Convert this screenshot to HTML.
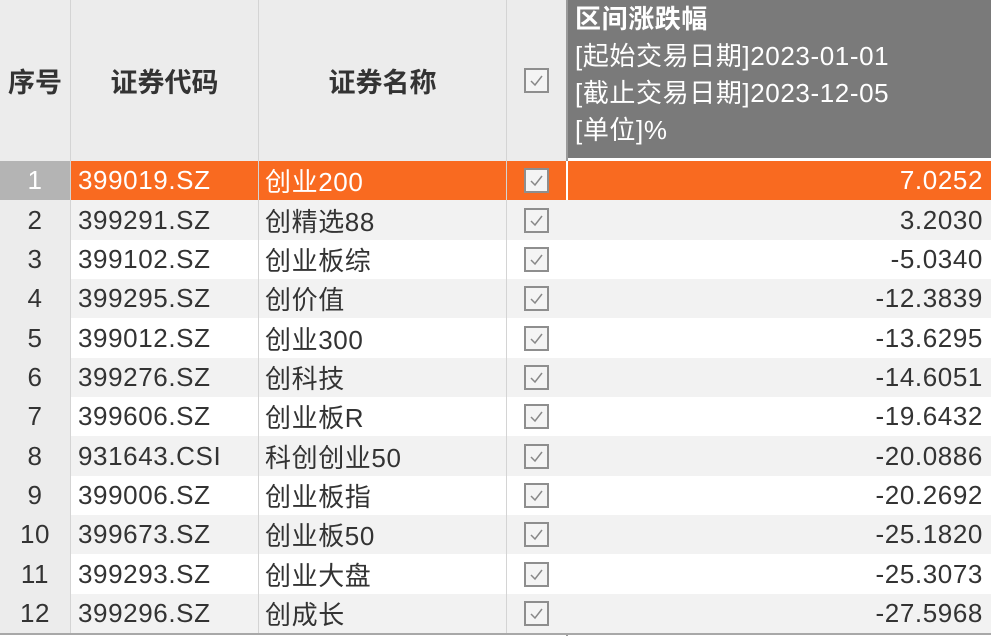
<!DOCTYPE html>
<html><head><meta charset="utf-8"><style>
body{margin:0;width:991px;height:638px;overflow:hidden;background:#fff;font-family:"Liberation Sans","Noto Sans CJK SC",sans-serif;position:relative}
.a{position:absolute;box-sizing:border-box}
.hd{background:#ececec;top:0;height:161px;color:#333;font-weight:bold;font-size:27px;display:flex;align-items:center;justify-content:center;border-right:1px solid #d4d4d4}
.r{position:absolute;left:0;width:991px;height:40px;font-size:26px;letter-spacing:0.6px;color:#333}
.r>div{position:absolute;top:0;height:100%;display:flex;align-items:center;box-sizing:border-box}
.c0{left:0;width:71px;background:#ececec;justify-content:center;border-right:1px solid #d4d4d4}
.c1{left:71px;width:188px;padding-left:7px;border-right:1px solid #d4d4d4}
.c2{left:259px;width:248px;padding-left:6px;border-right:1px solid #d4d4d4}
.c3{left:507px;width:59px;justify-content:center}
.c4{left:568px;width:423px;justify-content:flex-end;padding-right:8px}
.cb{width:25px;height:25px;border:2px solid #8e8e8e;background:#f4f4f4;box-sizing:border-box;position:relative;flex:none}
.cb svg{position:absolute;left:3px;top:4px}
.hl>div{background:#f96a20;color:#fff}
.hl>.c0{background:#b4b4b4;color:#fff}
</style></head><body>
<div class="a hd" style="left:0;width:71px">序号</div>
<div class="a hd" style="left:71px;width:188px">证券代码</div>
<div class="a hd" style="left:259px;width:248px">证券名称</div>
<div class="a hd" style="left:507px;width:59px;border-right:none"><div class="cb"><svg width="15" height="13" viewBox="0 0 15 13"><path d="M2 7 L6 11 L13 2" fill="none" stroke="#888" stroke-width="1.5"/></svg></div></div>
<div class="a" style="left:566px;top:0;width:2px;height:636px;background:#9a9a9a"></div>
<div class="a" style="left:568px;top:0;width:423px;height:158px;background:#7a7a7a;color:#fff;font-size:26px;letter-spacing:0.6px;line-height:37px;padding:1px 0 0 7px">
<div style="font-weight:bold">区间涨跌幅</div><div>[起始交易日期]2023-01-01</div><div>[截止交易日期]2023-12-05</div><div>[单位]%</div></div>
<div id="rows"></div>
<div class="a" style="left:0;top:633px;width:991px;height:2px;background:#a8a8a8"></div>
<script>
var d=[["399019.SZ","创业200","7.0252"],["399291.SZ","创精选88","3.2030"],["399102.SZ","创业板综","-5.0340"],["399295.SZ","创价值","-12.3839"],["399012.SZ","创业300","-13.6295"],["399276.SZ","创科技","-14.6051"],["399606.SZ","创业板R","-19.6432"],["931643.CSI","科创创业50","-20.0886"],["399006.SZ","创业板指","-20.2692"],["399673.SZ","创业板50","-25.1820"],["399293.SZ","创业大盘","-25.3073"],["399296.SZ","创成长","-27.5968"]];
var h="";
var cb='<div class="cb"><svg width="15" height="13" viewBox="0 0 15 13"><path d="M2 7 L6 11 L13 2" fill="none" stroke="#888" stroke-width="1.5"/></svg></div>';
for(var i=0;i<12;i++){var t=Math.round(161+i*39.33),t2=Math.round(161+(i+1)*39.33);
var bg=i%2?"#f2f2f2":"#fff";
h+='<div class="r'+(i==0?' hl':'')+'" style="top:'+t+'px;height:'+(t2-t)+'px;background:'+bg+'"><div class="c0">'+(i+1)+'</div><div class="c1">'+d[i][0]+'</div><div class="c2">'+d[i][1]+'</div><div class="c3">'+cb+'</div><div class="c4">'+d[i][2]+'</div></div>';}
document.getElementById("rows").innerHTML=h;
</script>
</body></html>
